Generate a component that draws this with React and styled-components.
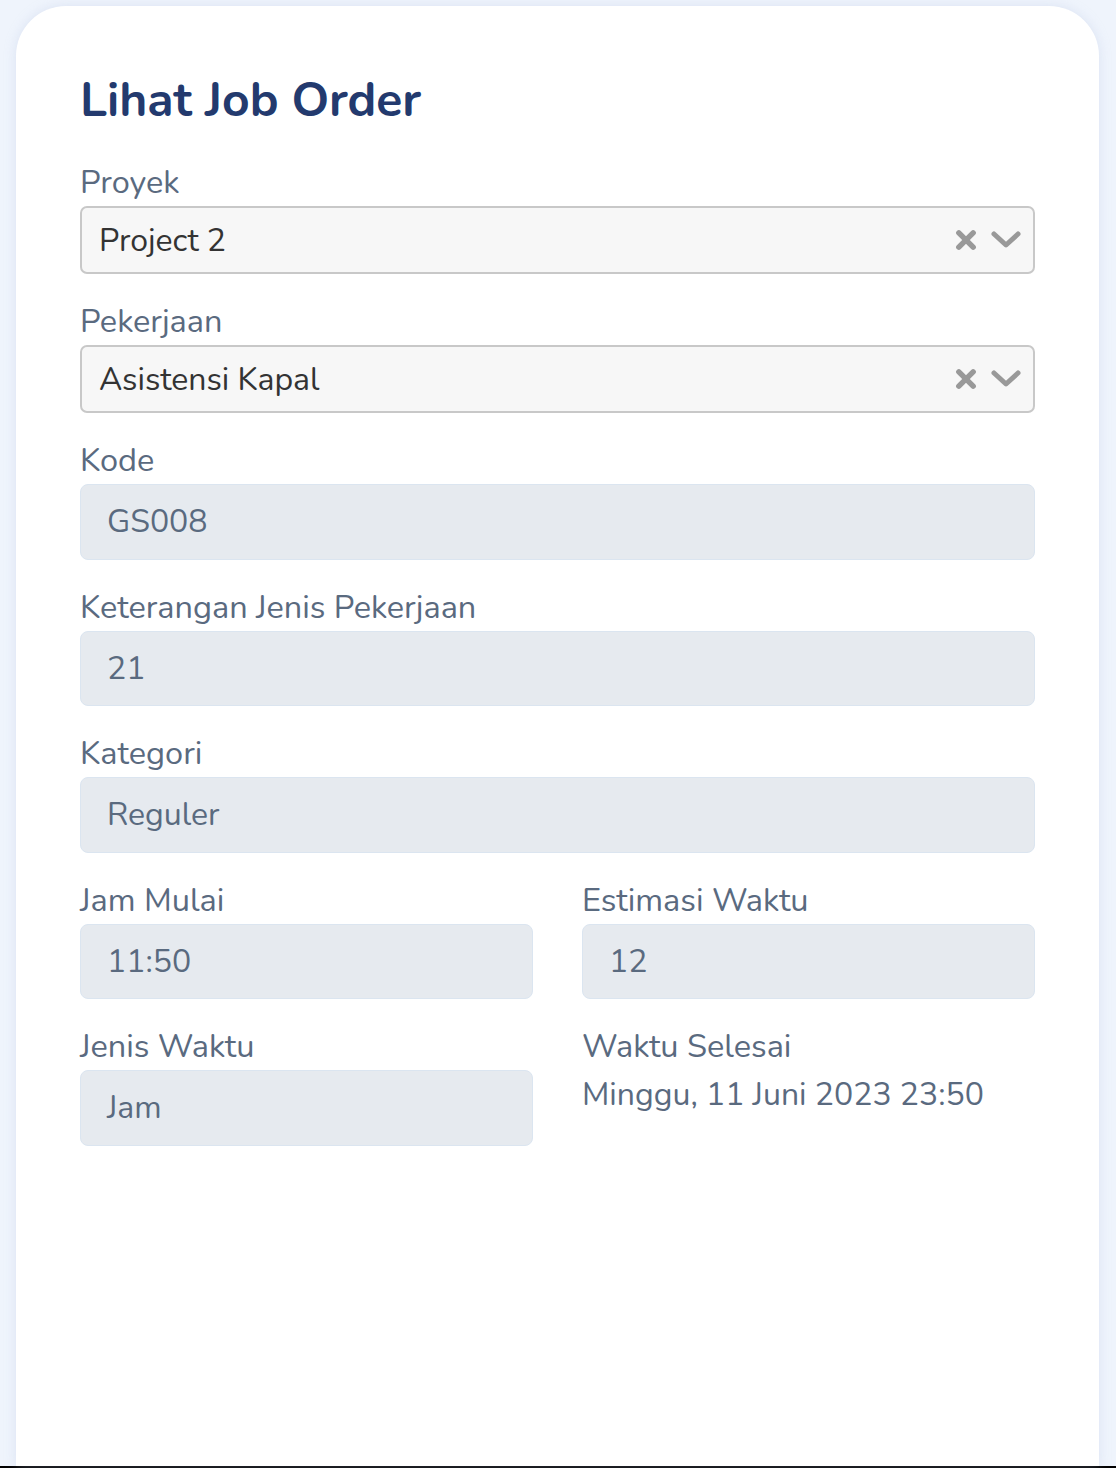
import React from "react";
import styled, { createGlobalStyle } from "styled-components";

const GlobalStyle = createGlobalStyle`
  html, body {
    margin: 0;
    padding: 0;
    background: #eff4fc;
  }
  body {
    font-family: "Nunito", Lato, "Noto Sans", sans-serif;
  }
  * {
    box-sizing: border-box;
  }
`;

const Page = styled.div`
  display: flex;
  flex-direction: column;
  min-height: 1468px;
  padding: 6px 17px 0 16px;
  border-bottom: 2px solid #000;
  background: #eff4fc;
`;

const Card = styled.div`
  flex: 1;
  background: #fff;
  border-radius: 50px 50px 0 0;
  padding: 66px 64px 40px 64px;
  box-shadow: 0 0 12px rgba(180, 195, 225, 0.35);
`;

const Title = styled.h1`
  margin: 0 0 34px;
  font-size: 48px;
  line-height: 56px;
  font-weight: 700;
  color: #233a6e;
`;

const Field = styled.div`
  display: flex;
  flex-direction: column;
  margin-bottom: 27px;
`;

const Row = styled.div`
  display: grid;
  grid-template-columns: 1fr 1fr;
  column-gap: 49px;
`;

const Label = styled.label`
  font-size: 32.5px;
  line-height: 40px;
  color: #5a6a7f;
  margin-bottom: 4px;
`;

const SelectBox = styled.div`
  display: flex;
  align-items: center;
  height: 68px;
  padding: 0 12px 0 17px;
  background: #f7f7f7;
  border: 2px solid #c8c8c8;
  border-radius: 7px;
`;

const SelectValue = styled.div`
  flex: 1;
  font-size: 32px;
  color: #333;
`;

const Indicators = styled.div`
  display: flex;
  align-items: center;
  gap: 14px;
  color: #999;
`;

const Input = styled.div`
  height: 75.5px;
  display: flex;
  align-items: center;
  padding: 0 26px;
  background: #e6eaef;
  border: 1.5px solid #dbe5f0;
  border-radius: 8px;
  font-size: 32px;
  color: #5a6a7f;
`;

const PlainValue = styled.div`
  font-size: 32px;
  line-height: 40px;
  color: #5a6a7f;
  margin-top: 5px;
`;

const ClearIcon = () => (
  <svg width="22" height="22" viewBox="0 0 20 20">
    <path
      d="M3.5 3.5 L16.5 16.5 M16.5 3.5 L3.5 16.5"
      stroke="currentColor"
      strokeWidth="5"
      strokeLinecap="round"
    />
  </svg>
);

const ChevronIcon = () => (
  <svg width="30" height="20" viewBox="0 0 30 20">
    <path
      d="M3 4 L15 15 L27 4"
      fill="none"
      stroke="currentColor"
      strokeWidth="5"
      strokeLinecap="round"
      strokeLinejoin="round"
    />
  </svg>
);

const Select = ({ value }) => (
  <SelectBox>
    <SelectValue>{value}</SelectValue>
    <Indicators>
      <ClearIcon />
      <ChevronIcon />
    </Indicators>
  </SelectBox>
);

const App = () => {
  return (
    <>
      <GlobalStyle />
      <Page>
        <Card>
          <Title>Lihat Job Order</Title>

          <Field>
            <Label>Proyek</Label>
            <Select value="Project 2" />
          </Field>

          <Field>
            <Label>Pekerjaan</Label>
            <Select value="Asistensi Kapal" />
          </Field>

          <Field>
            <Label>Kode</Label>
            <Input>GS008</Input>
          </Field>

          <Field>
            <Label>Keterangan Jenis Pekerjaan</Label>
            <Input>21</Input>
          </Field>

          <Field>
            <Label>Kategori</Label>
            <Input>Reguler</Input>
          </Field>

          <Row>
            <Field>
              <Label>Jam Mulai</Label>
              <Input>11:50</Input>
            </Field>
            <Field>
              <Label>Estimasi Waktu</Label>
              <Input>12</Input>
            </Field>
            <Field>
              <Label>Jenis Waktu</Label>
              <Input>Jam</Input>
            </Field>
            <Field>
              <Label>Waktu Selesai</Label>
              <PlainValue>Minggu, 11 Juni 2023 23:50</PlainValue>
            </Field>
          </Row>
        </Card>
      </Page>
    </>
  );
};

export default App;
